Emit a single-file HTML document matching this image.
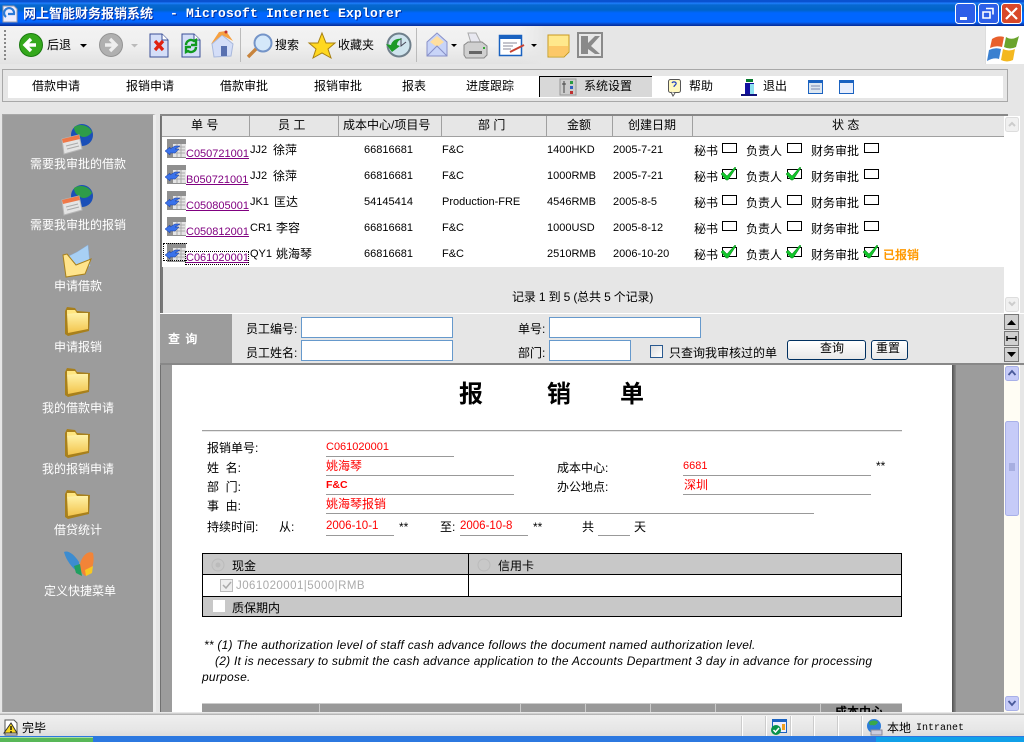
<!DOCTYPE html>
<html lang="zh"><head><meta charset="utf-8"><title>网上智能财务报销系统</title>
<style>
html,body{margin:0;padding:0;width:1024px;height:742px;overflow:hidden;background:#e6e6e6}
body{position:relative;font:12px/14px "Liberation Sans","WenQuanYi Zen Hei","Noto Sans CJK SC",sans-serif;color:#000}
.a,.t,svg{position:absolute}
.t{white-space:nowrap}
.w{color:#fff;width:150px;text-align:center;left:3px}
.r{color:#f00}
.l{height:1px;background:#999;position:absolute}
.ln{color:#800080;text-decoration:underline;font-size:11px}
.x{font-size:11px}
.it{font-style:italic;letter-spacing:.24px}
.cb{position:absolute;width:13px;height:8px;border:1.5px solid #000;background:#fff}
.ip{position:absolute;border:1px solid #6699cc;background:#fff;box-sizing:border-box}
.sep{position:absolute;top:116px;height:20px;width:1px;background:#a0a0a0}
.vs{position:absolute;top:716px;height:20px;width:1px;background:#fff;border-left:1px solid #ccc}
</style></head><body>
<svg width="0" height="0" style="position:absolute"><defs>
<linearGradient id="fd" x1="0" y1="0" x2="0" y2="1"><stop offset="0" stop-color="#fff2a8"/><stop offset="1" stop-color="#f2c44c"/></linearGradient>
<g id="folder"><path d="M2 6 2 29 5 31 26 26 27 7 14 6 12 3 4 2Z" fill="#a8801c"/><path d="M4 8 25 8 25 24 5 28Z" fill="url(#fd)"/><path d="M4 5 12 5 14 8 4 9Z" fill="#ffe680"/></g>
<g id="cal"><circle cx="20" cy="11" r="11" fill="#1a4fb8"/><path d="M12 3C18-1 27 1 30 8 26 14 20 14 17 11 14 10 12 7 12 3Z" fill="#2e9c48"/><path d="M0 15 17 11 20 25 2 30Z" fill="#e4e4e4" stroke="#b8b8b8"/><path d="M0 15 17 11 18 15 1 19Z" fill="#ef7848"/><path d="M4 22 16 19M5 25 17 22" stroke="#aaa"/></g>
<g id="doc"><path d="M1 1 13 1 19 7 19 24 1 24Z" fill="#d4def8" stroke="#3a4f96"/><path d="M13 1 13 7 19 7" fill="#fff" stroke="#3a4f96"/></g>
<g id="row"><rect x="2" y="0" width="19" height="19" fill="#8f8f8f"/><rect x="8" y="5" width="13" height="13" fill="#e4e4e4"/><path d="M9 8h11M9 11h11M9 14h11M12 5v13M16 5v13" stroke="#aaa"/><path d="M0 12 5 8 5 10 10 7 15 7 10 10 14 10 10 14 5 14 5 16Z" fill="#3a72ea" stroke="#17389a" stroke-width=".5"/></g>
<g id="chk"><path d="M3 5 7 9 15 0 16 1 8 13 6 13 1 7Z" fill="#11c52a" stroke="#067a14" stroke-width=".5"/></g>
</defs></svg>

<!-- title bar -->
<div class="a" style="left:0;top:0;width:1024px;height:26px;background:linear-gradient(#0a52d0 0,#0a52d0 2px,#1f7fff 3px,#0868d0 5px,#0064c8 10px,#0066ff 13px,#0066ff 22px,#0a46c0 24px,#002a9c 26px)"></div>
<svg style="left:1px;top:5px" width="18" height="18"><path d="M2 1h11l3 3v13H2Z" fill="#eef" stroke="#99a"/><path d="M5 12a5 5 0 1 1 8-3H7" fill="none" stroke="#2a7ad8" stroke-width="2.200"/></svg>
<div class="t" style="left:23px;top:6px;color:#fff;font-size:13px;font-weight:bold;text-shadow:1px 1px 0 #002a9c;line-height:15px">网上智能财务报销系统</div>
<div class="t" style="left:170px;top:6px;color:#fff;font:bold 13px/15px 'Liberation Mono',monospace;letter-spacing:.2px;text-shadow:1px 1px 0 #002a9c">- Microsoft Internet Explorer</div>
<svg style="left:955px;top:2px" width="68" height="22">
<rect x=".5" y="1.500" width="20" height="20" rx="3" fill="#2d5fe8" stroke="#fff"/><rect x="5" y="15" width="7" height="3" fill="#fff"/>
<rect x="23.500" y="1.500" width="20" height="20" rx="3" fill="#2d5fe8" stroke="#fff"/><path d="M31 6.500h7v6M28 10h7v6h-7Z" fill="none" stroke="#fff" stroke-width="1.600"/>
<rect x="46.500" y="1.500" width="20" height="20" rx="3" fill="#d8482a" stroke="#fff"/><path d="M51 6 62 17M62 6 51 17" stroke="#fff" stroke-width="2.200"/></svg>

<!-- toolbar -->
<div class="a" style="left:0;top:26px;width:985px;height:38px;background:linear-gradient(90deg,rgba(230,230,230,0) 520px,#e6e6e6 545px),linear-gradient(#f2f2f2,#f0f0f0 50%,#e2e2e2 100%)"></div>
<div class="a" style="left:985px;top:26px;width:39px;height:38px;background:#fff;border-left:1px solid #ddd;box-sizing:border-box"></div>
<div class="a" style="left:4px;top:30px;width:2px;height:30px;background:repeating-linear-gradient(#888 0 2px,transparent 2px 4px)"></div>
<div class="a" style="left:240px;top:28px;width:1px;height:34px;background:#bbb"></div>
<div class="a" style="left:416px;top:28px;width:1px;height:34px;background:#bbb"></div>
<svg style="left:0;top:26px" width="1024" height="38">
<circle cx="31" cy="19" r="11.500" fill="#34a81c" stroke="#1a7a10"/><path d="M36 19H27M31 13l-6 6 6 6" fill="none" stroke="#fff" stroke-width="3.400"/>
<path d="M80 18h7l-3.500 3.500Z" fill="#000"/>
<circle cx="111" cy="19" r="11.500" fill="#b0b0b0" stroke="#949494"/><path d="M105 19h9M110 13l6 6-6 6" fill="none" stroke="#eee" stroke-width="3.400"/>
<path d="M131 18h7l-3.500 3.500Z" fill="#bbb"/>
<use href="#doc" x="149" y="7"/><path d="M155 15 163 24M163 15 155 24" stroke="#e02010" stroke-width="3.200"/>
<use href="#doc" x="181" y="7"/><path d="M186 19a5 5 0 0 1 8-4l2-1v5h-5M196 21a5 5 0 0 1-8 4l-2 1v-5h5" fill="none" stroke="#109a20" stroke-width="2.400"/>
<path d="M212 18 222 9 233 18 231 30 214 31Z" fill="#d4def8" stroke="#a8b8dc"/><path d="M211 18 219 6 226 5 233 15 222 9Z" fill="#f6a040"/><rect x="221" y="20" width="6" height="10" fill="#5870b0"/><circle cx="226" cy="6" r="1.500" fill="#c03030"/>
<circle cx="263" cy="17" r="8.500" fill="#d4e8fa" stroke="#7494c8" stroke-width="2"/><path d="M256 23 248 31" stroke="#c8843c" stroke-width="3.400"/>
<path d="M322 7 326 17 335 17 328 23 331 32 322 27 313 32 316 23 309 17 318 17Z" fill="#ffd820" stroke="#a88010"/>
<circle cx="399" cy="19" r="11.500" fill="#cfe4ee" stroke="#70808c" stroke-width="2"/><path d="M401 12v8l5-4" stroke="#445" fill="none"/><path d="M386 18l6 8 8-6-3-1c0-3 2-5 5-6-6-1-10 2-11 6Z" fill="#1c9a28"/>
<path d="M427 16 437 7 447 16 447 30 427 30Z" fill="#c8d4f8" stroke="#8890c8"/><path d="M430 16 437 10 444 16 437 21Z" fill="#ffdfa0"/><path d="M427 30 437 20 447 30" fill="none" stroke="#8890c8"/>
<path d="M451 18h6l-3 3Z" fill="#000"/>
<path d="M468 7h8l5 10h-10Z" fill="#e8e8f0" stroke="#aaa"/><path d="M464 19l4-3h14l5 4v9l-3 3h-18l-2-3Z" fill="#d0d0d0" stroke="#888"/><rect x="469" y="25" width="13" height="3" fill="#666"/><rect x="483" y="21" width="2" height="2" fill="#3a3"/>
<rect x="499.500" y="9.500" width="22" height="20" fill="#fff" stroke="#1a62c0" stroke-width="1.500"/><rect x="499" y="9" width="23" height="4" fill="#1a62c0"/><path d="M503 17h14M503 20h10M503 23h8" stroke="#889"/><path d="M510 26 524 19" stroke="#c84030" stroke-width="2"/>
<path d="M531 18h6l-3 3Z" fill="#000"/>
<path d="M548 9h21v17l-5 5h-16Z" fill="#ffe88c" stroke="#c89820"/><path d="M549 20h19v6l-4 4h-15Z" fill="#fcc868"/>
<rect x="578" y="7" width="24" height="24" fill="#e8e8e8" stroke="#8a8a8a" stroke-width="2"/><path d="M581 10h7v7l7-7h5l-9 10 9 8h-5l-7-5v5h-7Z" fill="#8a8a8a"/>
<path d="M992 13Q998 9 1004 11L1002 21Q996 19 990 22Z" fill="#e8602c"/><path d="M1006 11Q1012 15 1019 10L1016 21Q1010 24 1004 21Z" fill="#6aa42c"/><path d="M989 24Q995 21 1001 23L999 33Q994 31 987 35Z" fill="#3a80d0"/><path d="M1003 23Q1009 26 1015 23L1013 34Q1007 37 1001 34Z" fill="#f4b820"/>
</svg>
<div class="t" style="left:47px;top:38px">后退</div>
<div class="t" style="left:275px;top:38px">搜索</div>
<div class="t" style="left:338px;top:38px">收藏夹</div>

<!-- menu bar -->
<div class="a" style="left:2px;top:69px;width:1006px;height:33px;background:#e6e6e6;border:1px solid #a8a8a8;box-sizing:border-box"></div>
<div class="a" style="left:8px;top:76px;width:995px;height:22px;background:#fff"></div>
<div class="a" style="left:539px;top:76px;width:113px;height:21px;background:#d8d8d8;border-top:1px solid #000;border-left:1px solid #000;box-sizing:border-box"></div>
<div class="t" style="left:32px;top:79px">借款申请</div>
<div class="t" style="left:126px;top:79px">报销申请</div>
<div class="t" style="left:220px;top:79px">借款审批</div>
<div class="t" style="left:314px;top:79px">报销审批</div>
<div class="t" style="left:402px;top:79px">报表</div>
<div class="t" style="left:466px;top:79px">进度跟踪</div>
<div class="t" style="left:584px;top:79px">系统设置</div>
<div class="t" style="left:689px;top:79px">帮助</div>
<div class="t" style="left:763px;top:79px">退出</div>
<svg style="left:0;top:70px" width="900" height="30">
<rect x="560" y="9" width="16" height="16" fill="#ccc" stroke="#999"/><path d="M564 11v12M562 14h4" stroke="#444"/><rect x="570" y="11" width="3" height="3" fill="#2a9a40"/><rect x="570" y="16" width="3" height="3" fill="#3060c0"/><rect x="570" y="21" width="3" height="3" fill="#c03030"/>
<rect x="668.500" y="9.500" width="12" height="13" rx="2" fill="#fff8c0" stroke="#555"/><path d="M671 22l2 4 2-3" fill="#fff" stroke="#555"/><path d="M672 13c1-2 5-1 4 1s-2 1-2 3" fill="none" stroke="#2040c0" stroke-width="1.200"/>
<rect x="746" y="9" width="7" height="3" fill="#087a30"/><rect x="745" y="13" width="9" height="12" fill="#1010a0"/><rect x="750" y="14" width="4" height="10" fill="#8ce0f0"/><path d="M741 24h16v2h-16Z" fill="#10107a"/>
<rect x="808.500" y="10.500" width="14" height="13" fill="#dce6f0" stroke="#1a62c0"/><rect x="808" y="10" width="15" height="3" fill="#1a62c0"/><path d="M811 16h9M811 19h9" stroke="#7a8ab0"/>
<rect x="839.500" y="10.500" width="14" height="13" fill="#e8eefc" stroke="#1a62c0"/><rect x="839" y="10" width="15" height="3" fill="#1a62c0"/>
</svg>

<!-- left panel -->
<div class="a" style="left:2px;top:114px;width:154px;height:599px;background:#9c9c9c;border:1px solid #a8a8a8;box-sizing:border-box;border-right:3px solid #eee"></div>
<div class="a" style="left:160px;top:114px;width:1px;height:599px;background:#707070"></div>
<svg style="left:60px;top:120px" width="36" height="480">
<use href="#cal" x="2" y="4"/><use href="#cal" x="2" y="65"/>
<path d="M7 137 17 132 28 125 30 146 20 148 9 147Z" fill="#a8d0f4" stroke="#88b0dc" stroke-width=".5"/>
<path d="M3 135 7 134 16 145 31 139 25 154 6 157Z" fill="#ffe48c" stroke="#a8801c"/>
<use href="#folder" y="185" x="3"/><use href="#folder" y="246" x="3"/><use href="#folder" y="307" x="3"/><use href="#folder" y="368" x="3"/>
<path d="M4 432C8 430 14 434 19 442 19 448 20 452 18 452 12 448 6 440 4 432Z" fill="#3c8cd0"/><path d="M20 444C22 436 28 430 33 433 35 442 32 452 26 456 22 455 20 450 20 444Z" fill="#f28438"/><path d="M25 450 33 446 32 453 26 456Z" fill="#f8c820"/><path d="M14 446 20 444 22 456 16 453Z" fill="#20a060"/></svg>
<div class="t w" style="top:157px">需要我审批的借款</div>
<div class="t w" style="top:218px">需要我审批的报销</div>
<div class="t w" style="top:279px">申请借款</div>
<div class="t w" style="top:340px">申请报销</div>
<div class="t w" style="top:401px">我的借款申请</div>
<div class="t w" style="top:462px">我的报销申请</div>
<div class="t w" style="top:523px">借贷统计</div>
<div class="t w" style="top:584px;left:5px">定义快捷菜单</div>

<!-- list -->
<div class="a" style="left:160px;top:114px;width:848px;height:2px;background:#888"></div>
<div class="a" style="left:161px;top:116px;width:2px;height:197px;background:#777"></div>
<div class="a" style="left:162px;top:116px;width:842px;height:21px;background:#e6e6e6;border-bottom:1px solid #a0a0a0;box-sizing:border-box"></div>
<div class="a" style="left:162px;top:137px;width:842px;height:130px;background:#fff"></div>
<div class="a" style="left:163px;top:267px;width:841px;height:46px;background:#e6e6e6"></div>
<div class="a" style="left:1004px;top:116px;width:16px;height:197px;background:#fff"></div>
<svg style="left:1004px;top:116px" width="16" height="197"><rect x="1.500" y="1.500" width="13" height="14" rx="2" fill="#f0f0f0" stroke="#ddd"/><path d="M5 10l3-3 3 3" fill="none" stroke="#ccc" stroke-width="2"/><rect x="1.500" y="181.500" width="13" height="14" rx="2" fill="#f0f0f0" stroke="#ddd"/><path d="M5 186l3 3 3-3" fill="none" stroke="#ccc" stroke-width="2"/></svg>
<div class="sep" style="left:249px"></div><div class="sep" style="left:338px"></div><div class="sep" style="left:441px"></div><div class="sep" style="left:546px"></div><div class="sep" style="left:612px"></div><div class="sep" style="left:692px"></div>
<div class="t" style="left:191px;top:118px">单 号</div><div class="t" style="left:278px;top:118px">员 工</div>
<div class="t" style="left:343px;top:118px">成本中心/项目号</div><div class="t" style="left:478px;top:118px">部 门</div>
<div class="t" style="left:567px;top:118px">金额</div><div class="t" style="left:628px;top:118px">创建日期</div><div class="t" style="left:832px;top:118px">状 态</div>

<svg style="left:165px;top:139px" width="24" height="125"><use href="#row" y="0"/><use href="#row" y="26"/><use href="#row" y="52"/><use href="#row" y="78"/><use href="#row" y="104"/></svg>
<div class="t ln" style="left:186px;top:147px">C050721001</div><div class="t ln" style="left:186px;top:173px">B050721001</div><div class="t ln" style="left:186px;top:199px">C050805001</div><div class="t ln" style="left:186px;top:225px">C050812001</div><div class="t ln" style="left:186px;top:251px">C061020001</div>
<div class="a" style="left:163px;top:243px;width:24px;height:18px;border:1px dotted #000;border-right:0;box-sizing:border-box"></div>
<div class="a" style="left:185px;top:251px;width:64px;height:14px;border:1px dotted #000;box-sizing:border-box"></div>

<div class="t x" style="left:250px;top:143px">JJ2</div><div class="t" style="left:273px;top:143px">徐萍</div>
<div class="t x" style="left:250px;top:169px">JJ2</div><div class="t" style="left:273px;top:169px">徐萍</div>
<div class="t x" style="left:250px;top:195px">JK1</div><div class="t" style="left:274px;top:195px">匡达</div>
<div class="t x" style="left:250px;top:221px">CR1</div><div class="t" style="left:276px;top:221px">李容</div>
<div class="t x" style="left:250px;top:247px">QY1</div><div class="t" style="left:276px;top:247px">姚海琴</div>

<div class="t x" style="left:364px;top:143px">66816681</div><div class="t x" style="left:442px;top:143px">F&amp;C</div><div class="t x" style="left:547px;top:143px">1400HKD</div><div class="t x" style="left:613px;top:143px">2005-7-21</div>
<div class="t x" style="left:364px;top:169px">66816681</div><div class="t x" style="left:442px;top:169px">F&amp;C</div><div class="t x" style="left:547px;top:169px">1000RMB</div><div class="t x" style="left:613px;top:169px">2005-7-21</div>
<div class="t x" style="left:364px;top:195px">54145414</div><div class="t x" style="left:442px;top:195px">Production-FRE</div><div class="t x" style="left:547px;top:195px">4546RMB</div><div class="t x" style="left:613px;top:195px">2005-8-5</div>
<div class="t x" style="left:364px;top:221px">66816681</div><div class="t x" style="left:442px;top:221px">F&amp;C</div><div class="t x" style="left:547px;top:221px">1000USD</div><div class="t x" style="left:613px;top:221px">2005-8-12</div>
<div class="t x" style="left:364px;top:247px">66816681</div><div class="t x" style="left:442px;top:247px">F&amp;C</div><div class="t x" style="left:547px;top:247px">2510RMB</div><div class="t x" style="left:613px;top:247px">2006-10-20</div>

<div class="t" style="left:694px;top:144px">秘书</div><div class="t" style="left:746px;top:144px">负责人</div><div class="t" style="left:811px;top:144px">财务审批</div>
<div class="t" style="left:694px;top:170px">秘书</div><div class="t" style="left:746px;top:170px">负责人</div><div class="t" style="left:811px;top:170px">财务审批</div>
<div class="t" style="left:694px;top:196px">秘书</div><div class="t" style="left:746px;top:196px">负责人</div><div class="t" style="left:811px;top:196px">财务审批</div>
<div class="t" style="left:694px;top:222px">秘书</div><div class="t" style="left:746px;top:222px">负责人</div><div class="t" style="left:811px;top:222px">财务审批</div>
<div class="t" style="left:694px;top:248px">秘书</div><div class="t" style="left:746px;top:248px">负责人</div><div class="t" style="left:811px;top:248px">财务审批</div>
<div class="t" style="left:883px;top:248px;color:#ff9900;font-weight:bold">已报销</div>
<div class="cb" style="left:722px;top:143px"></div><div class="cb" style="left:787px;top:143px"></div><div class="cb" style="left:864px;top:143px"></div>
<div class="cb" style="left:722px;top:169px"></div><div class="cb" style="left:787px;top:169px"></div><div class="cb" style="left:864px;top:169px"></div>
<div class="cb" style="left:722px;top:195px"></div><div class="cb" style="left:787px;top:195px"></div><div class="cb" style="left:864px;top:195px"></div>
<div class="cb" style="left:722px;top:221px"></div><div class="cb" style="left:787px;top:221px"></div><div class="cb" style="left:864px;top:221px"></div>
<div class="cb" style="left:722px;top:247px"></div><div class="cb" style="left:787px;top:247px"></div><div class="cb" style="left:864px;top:247px"></div>
<svg style="left:720px;top:167px" width="16" height="14"><use href="#chk"/></svg><svg style="left:785px;top:167px" width="16" height="14"><use href="#chk"/></svg>
<svg style="left:720px;top:245px" width="16" height="14"><use href="#chk"/></svg><svg style="left:785px;top:245px" width="16" height="14"><use href="#chk"/></svg><svg style="left:862px;top:245px" width="16" height="14"><use href="#chk"/></svg>
<div class="t" style="left:512px;top:290px;letter-spacing:-.15px">记录 1 到 5 (总共 5 个记录)</div>

<!-- query -->
<div class="a" style="left:160px;top:313px;width:864px;height:1px;background:#fff"></div>
<div class="a" style="left:160px;top:314px;width:72px;height:49px;background:#9c9c9c"></div>
<div class="t" style="left:168px;top:332px;color:#fff;font-weight:bold;letter-spacing:1px">查 询</div>
<div class="t" style="left:246px;top:322px">员工编号:</div><div class="t" style="left:246px;top:346px">员工姓名:</div>
<div class="t" style="left:518px;top:322px">单号:</div><div class="t" style="left:518px;top:346px">部门:</div>
<div class="ip" style="left:301px;top:317px;width:152px;height:21px"></div><div class="ip" style="left:301px;top:340px;width:152px;height:21px"></div>
<div class="ip" style="left:549px;top:317px;width:152px;height:21px"></div><div class="ip" style="left:549px;top:340px;width:82px;height:21px"></div>
<div class="a" style="left:650px;top:345px;width:13px;height:13px;border:1px solid #2a5a90;background:linear-gradient(135deg,#ddd,#fff);box-sizing:border-box"></div>
<div class="t" style="left:669px;top:346px">只查询我审核过的单</div>
<div class="a" style="left:787px;top:340px;width:79px;height:20px;border:1px solid #003060;border-radius:3px;background:linear-gradient(#fff,#e8e8e8);box-sizing:border-box"></div>
<div class="a" style="left:871px;top:340px;width:37px;height:20px;border:1px solid #003060;border-radius:3px;background:linear-gradient(#fff,#e8e8e8);box-sizing:border-box"></div>
<div class="t" style="left:820px;top:341px">查询</div><div class="t" style="left:876px;top:341px">重置</div>
<svg style="left:1004px;top:314px" width="16" height="48"><g fill="#d0d0d0" stroke="#777"><rect x=".5" y=".5" width="14" height="15"/><rect x=".5" y="17.500" width="14" height="14"/><rect x=".5" y="33.500" width="14" height="14"/></g><path d="M3 11l4.500-5 4.500 5ZM3 38l4.500 5 4.500-5Z" fill="#000"/><path d="M3 24.500h9M3 22v5M12 22v5" stroke="#000" stroke-width="1.300" fill="none"/></svg>

<!-- document frame -->
<div class="a" style="left:160px;top:363px;width:864px;height:2px;background:#888"></div>
<div class="a" style="left:161px;top:365px;width:843px;height:348px;background:#9c9c9c"></div>
<div class="a" style="left:172px;top:365px;width:780px;height:347px;background:#fff"></div>
<div class="a" style="left:952px;top:365px;width:4px;height:347px;background:linear-gradient(90deg,#505050,#8a8a8a)"></div>
<div class="a" style="left:1004px;top:365px;width:16px;height:347px;background:#fffdf4"></div>
<svg style="left:1004px;top:365px" width="16" height="348"><g fill="#c6cbf8" stroke="#a8b0e8"><rect x="1.500" y="1.500" width="13" height="14" rx="2"/><rect x="1.500" y="56.500" width="13" height="94" rx="2"/><rect x="1.500" y="331.500" width="13" height="14" rx="2"/></g><path d="M4.500 10l3.500-4 3.500 4M4.500 336l3.500 4 3.500-4" fill="none" stroke="#4a5a9a" stroke-width="1.800"/><path d="M5 99h6M5 101h6M5 103h6M5 105h6" stroke="#8890c8"/></svg>

<div class="t" style="left:459px;top:381px;font-size:24px;line-height:28px;font-weight:bold">报</div>
<div class="t" style="left:547px;top:381px;font-size:24px;line-height:28px;font-weight:bold">销</div>
<div class="t" style="left:620px;top:381px;font-size:24px;line-height:28px;font-weight:bold">单</div>
<div class="a" style="left:202px;top:430px;width:700px;height:2px;background:linear-gradient(#a0a0a0 50%,#e8e8e8 50%)"></div>

<div class="t" style="left:207px;top:441px">报销单号:</div><div class="t" style="left:207px;top:461px">姓&nbsp;&nbsp;名:</div><div class="t" style="left:207px;top:480px">部&nbsp;&nbsp;门:</div><div class="t" style="left:207px;top:499px">事&nbsp;&nbsp;由:</div>
<div class="t" style="left:207px;top:520px">持续时间:</div><div class="t" style="left:279px;top:520px">从:</div>
<div class="t r x" style="left:326px;top:440px">C061020001</div><div class="l" style="left:326px;top:456px;width:128px"></div>
<div class="t r" style="left:326px;top:459px">姚海琴</div><div class="l" style="left:326px;top:475px;width:188px"></div>
<div class="t r" style="left:326px;top:478px;font-weight:bold;font-size:10.5px">F&amp;C</div><div class="l" style="left:326px;top:494px;width:188px"></div>
<div class="t r" style="left:326px;top:497px">姚海琴报销</div><div class="l" style="left:326px;top:513px;width:488px"></div>
<div class="t r" style="left:326px;top:519px;font-size:11.5px">2006-10-1</div><div class="l" style="left:326px;top:535px;width:68px"></div><div class="t" style="left:399px;top:520px">**</div>
<div class="t" style="left:440px;top:520px">至:</div><div class="t r" style="left:460px;top:519px;font-size:11.5px">2006-10-8</div><div class="l" style="left:460px;top:535px;width:68px"></div><div class="t" style="left:533px;top:520px">**</div>
<div class="t" style="left:582px;top:520px">共</div><div class="l" style="left:598px;top:535px;width:32px"></div><div class="t" style="left:634px;top:520px">天</div>
<div class="t" style="left:557px;top:461px">成本中心:</div><div class="t r x" style="left:683px;top:459px">6681</div><div class="l" style="left:683px;top:475px;width:188px"></div><div class="t" style="left:876px;top:459px">**</div>
<div class="t" style="left:557px;top:480px">办公地点:</div><div class="t r" style="left:684px;top:478px">深圳</div><div class="l" style="left:683px;top:494px;width:188px"></div>

<div class="a" style="left:202px;top:553px;width:700px;height:64px;background:#c8c8c8;border:1px solid #000;box-sizing:border-box"></div>
<div class="a" style="left:203px;top:574px;width:698px;height:21px;background:#fff;border-top:1px solid #000;border-bottom:1px solid #000"></div>
<div class="a" style="left:468px;top:554px;width:1px;height:42px;background:#000"></div>
<svg style="left:210px;top:556px" width="290" height="58"><circle cx="8" cy="9" r="6" fill="none" stroke="#bbb"/><circle cx="8" cy="9" r="2.500" fill="#bbb"/><circle cx="274" cy="9" r="6" fill="none" stroke="#bbb"/><rect x="10.500" y="23.500" width="12" height="12" fill="#eee" stroke="#bbb"/><path d="M13 29l3 3 5-6" fill="none" stroke="#aaa" stroke-width="1.500"/><rect x="3" y="44" width="12" height="12" fill="#fff"/></svg>
<div class="t" style="left:232px;top:559px">现金</div><div class="t" style="left:498px;top:559px">信用卡</div>
<div class="t" style="left:236px;top:579px;color:#aaa;font-size:11.5px;letter-spacing:.45px">J061020001|5000|RMB</div>
<div class="t" style="left:232px;top:601px">质保期内</div>

<div class="t it" style="left:204px;top:638px">** (1) The authorization level of staff cash advance follows the document named authorization level.</div>
<div class="t it" style="left:215px;top:654px">(2) It is necessary to submit the cash advance application to the Accounts Department 3 day in advance for processing</div>
<div class="t it" style="left:202px;top:670px">purpose.</div>

<div class="a" style="left:202px;top:703px;width:700px;height:9px;background:#999;border-top:1px solid #ccc;box-sizing:border-box;overflow:hidden"><div class="t" style="left:633px;top:1px;font-weight:bold">成本中心</div></div>
<div class="a" style="left:319px;top:703px;width:1px;height:9px;background:#ccc"></div><div class="a" style="left:520px;top:703px;width:1px;height:9px;background:#ccc"></div><div class="a" style="left:585px;top:703px;width:1px;height:9px;background:#ccc"></div><div class="a" style="left:650px;top:703px;width:1px;height:9px;background:#ccc"></div><div class="a" style="left:715px;top:703px;width:1px;height:9px;background:#ccc"></div><div class="a" style="left:820px;top:703px;width:1px;height:9px;background:#ccc"></div>

<!-- status bar -->
<div class="a" style="left:0;top:712px;width:1024px;height:3px;background:linear-gradient(#f4f4f4,#aaa)"></div>
<div class="a" style="left:0;top:715px;width:1024px;height:21px;background:linear-gradient(#efefef,#e6e6e6 70%,#ddd)"></div>
<div class="a" style="left:0;top:736px;width:1024px;height:6px;background:#2c78e0"></div>
<div class="a" style="left:0;top:737px;width:93px;height:5px;background:#58b858;border-top:1px solid #a8dca8;box-sizing:border-box"></div>
<div class="a" style="left:876px;top:737px;width:148px;height:5px;background:#10a0e8"></div>
<svg style="left:3px;top:719px" width="16" height="17"><path d="M2 1h9l3 3v12H2Z" fill="#fff" stroke="#555"/><path d="M8 4l6 10H1Z" fill="#f8d820" stroke="#333"/><path d="M8 7v4M8 12v1.500" stroke="#000" stroke-width="1.300"/></svg>
<div class="t" style="left:22px;top:721px">完毕</div>
<div class="vs" style="left:741px"></div><div class="vs" style="left:765px"></div><div class="vs" style="left:790px"></div><div class="vs" style="left:813px"></div><div class="vs" style="left:837px"></div><div class="vs" style="left:861px"></div>
<svg style="left:770px;top:719px" width="18" height="17"><rect x="2.500" y=".5" width="14" height="13" fill="#eef" stroke="#1a62c0"/><rect x="2" y="0" width="15" height="3" fill="#1a62c0"/><circle cx="6" cy="11" r="5" fill="#08924a"/><path d="M3.500 11l2 2 3.500-4" fill="none" stroke="#fff" stroke-width="1.500"/><rect x="12" y="5" width="3" height="6" fill="#f0a020"/></svg>
<svg style="left:866px;top:719px" width="18" height="17"><circle cx="8" cy="7" r="7" fill="#2c7cd8"/><path d="M3 3c3-2 7-2 9 0-1 3-4 4-6 3-2 1-3-1-3-3Z" fill="#3aa848"/><rect x="5" y="11" width="11" height="5" fill="#ccd" stroke="#889"/></svg>
<div class="t" style="left:887px;top:721px">本地</div>
<div class="t" style="left:916px;top:722px;font:10px/14px 'Liberation Mono',monospace">Intranet</div>
</body></html>
